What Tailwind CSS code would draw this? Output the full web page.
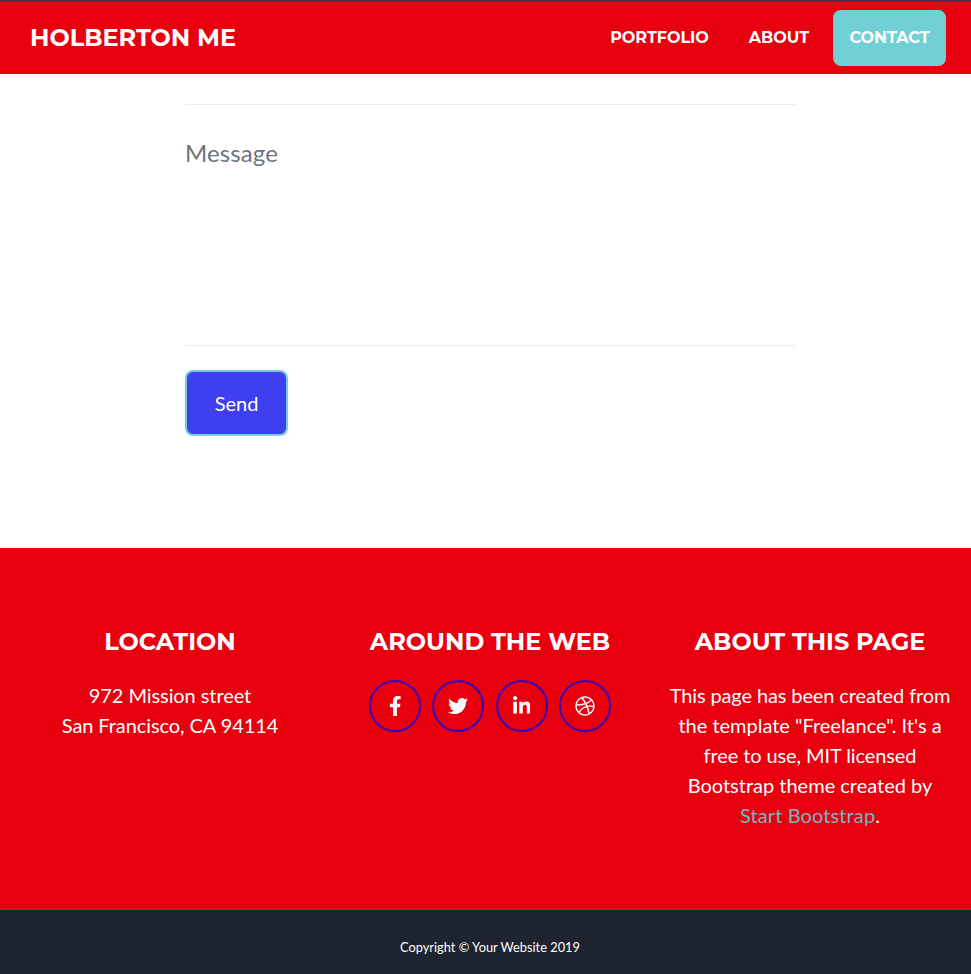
<!DOCTYPE html>
<html lang="en">
<head>
<meta charset="utf-8">
<title>Holberton Me</title>
<script src="https://cdn.jsdelivr.net/npm/@tailwindcss/browser@4"></script>
</head>
<body class="w-[971px] h-[974px] overflow-hidden bg-white font-[Lato,sans-serif] text-white">
<header class="flex h-[74px] items-start border-t-2 border-[#3b3b3b] bg-[#e8000f] pl-[30px] pr-[25px] font-['Montserrat','Inter',sans-serif] font-bold">
  <a class="mt-[18px] block whitespace-nowrap text-2xl leading-9">HOLBERTON ME</a>
  <nav class="ml-auto mt-2 flex gap-2 text-base leading-6">
    <a class="flex h-14 w-[131px] items-center justify-center whitespace-nowrap">PORTFOLIO</a>
    <a class="flex h-14 w-[92px] items-center justify-center whitespace-nowrap">ABOUT</a>
    <a class="flex h-14 w-[113px] items-center justify-center whitespace-nowrap rounded-lg bg-[#71d0d6]">CONTACT</a>
  </nav>
</header>
<main class="h-[474px] pl-[185px] pt-[30px]">
  <div class="h-[242px] w-[610px] border-y border-[#e9ecef] pt-[30px] text-2xl leading-9 tracking-[0.1px] text-[#6c757d]">Message</div>
  <button class="mt-6 block h-[66px] w-[103px] rounded-lg border-2 border-[#71d0d6] bg-[#3f3ff2] text-xl">Send</button>
</main>
<footer>
  <div class="grid h-[362px] w-[980px] grid-cols-3 bg-[#e8000f] px-[10px] pt-[79px] text-center">
    <section>
      <h4 class="h-[53px] whitespace-nowrap font-['Montserrat','Inter',sans-serif] text-2xl leading-[29px] font-bold">LOCATION</h4>
      <p class="text-xl leading-[30px] tracking-[-0.08px]">972 Mission street<br>San Francisco, CA 94114</p>
    </section>
    <section>
      <h4 class="h-[53px] whitespace-nowrap font-['Montserrat','Inter',sans-serif] text-2xl leading-[29px] font-bold">AROUND THE WEB</h4>
      <div class="flex justify-center gap-[11.4px] text-[#f8f9fa]">
        <a class="flex size-[52px] items-center justify-center rounded-full border-2 border-[#3a00b5]"><svg class="h-5" viewBox="0 0 320 512" fill="currentColor"><path d="M279.14 288l14.22-92.66h-88.91v-60.13c0-25.35 12.42-50.06 52.24-50.06h40.42V6.26S260.43 0 225.36 0c-73.22 0-121.08 44.38-121.08 124.72v70.62H22.89V288h81.39v224h100.17V288z"/></svg></a>
        <a class="flex size-[52px] items-center justify-center rounded-full border-2 border-[#3a00b5]"><svg class="h-5" viewBox="0 0 512 512" fill="currentColor"><path d="M459.37 151.716c.325 4.548.325 9.097.325 13.645 0 138.72-105.583 298.558-298.558 298.558-59.452 0-114.68-17.219-161.137-47.106 8.447.974 16.568 1.299 25.34 1.299 49.055 0 94.213-16.568 130.274-44.832-46.132-.975-84.792-31.188-98.112-72.772 6.498.974 12.995 1.624 19.818 1.624 9.421 0 18.843-1.3 27.614-3.573-48.081-9.747-84.143-51.98-84.143-102.985v-1.299c13.969 7.797 30.214 12.67 47.431 13.319-28.264-18.843-46.781-51.005-46.781-87.391 0-19.492 5.197-37.36 14.294-52.954 51.655 63.675 129.3 105.258 216.365 109.807-1.624-7.797-2.599-15.918-2.599-24.04 0-57.828 46.782-104.934 104.934-104.934 30.213 0 57.502 12.67 76.67 33.137 23.715-4.548 46.456-13.32 66.599-25.34-7.798 24.366-24.366 44.833-46.132 57.827 21.117-2.273 41.584-8.122 60.426-16.243-14.292 20.791-32.161 39.308-52.628 54.253z"/></svg></a>
        <a class="flex size-[52px] items-center justify-center rounded-full border-2 border-[#3a00b5]"><svg class="h-5" viewBox="0 0 448 512" fill="currentColor"><path d="M100.28 448H7.4V148.9h92.88zM53.79 108.1C24.09 108.1 0 83.5 0 53.8a53.79 53.79 0 0 1 107.58 0c0 29.7-24.1 54.3-53.79 54.3zM447.9 448h-92.68V302.4c0-34.7-.7-79.2-48.29-79.2-48.29 0-55.69 37.7-55.69 76.7V448h-92.78V148.9h89.08v40.8h1.3c12.4-23.5 42.69-48.3 87.88-48.3 94 0 111.28 61.9 111.28 142.3V448z"/></svg></a>
        <a class="flex size-[52px] items-center justify-center rounded-full border-2 border-[#3a00b5]"><svg class="h-5" viewBox="0 0 512 512" fill="currentColor"><path d="M256 8C119.252 8 8 119.252 8 256s111.252 248 248 248 248-111.252 248-248S392.748 8 256 8zm163.97 114.366c29.503 36.046 47.369 81.957 47.835 131.955-6.984-1.477-77.018-15.682-147.502-6.818-5.752-14.041-11.181-26.393-18.617-41.614 78.321-31.977 113.818-77.482 118.284-83.523zM396.421 97.87c-3.81 5.427-35.697 48.286-111.021 76.519-34.712-63.776-73.185-116.168-79.04-124.008 67.176-16.193 137.966 1.27 190.061 47.489zm-230.48-33.25c5.585 7.659 43.438 60.116 78.537 122.509-99.087 26.313-186.36 25.934-195.834 25.809C62.38 147.205 106.678 92.573 165.941 64.62zM44.17 256.323c0-2.166.043-4.322.108-6.473 9.268.19 111.92 1.513 217.706-30.146 6.064 11.868 11.857 23.915 17.174 35.949-76.599 21.575-146.194 83.527-180.531 142.306C64.794 360.405 44.17 310.73 44.17 256.323zm81.807 167.113c22.127-45.233 82.178-103.622 167.579-132.756 29.74 77.283 42.039 142.053 45.189 160.638-68.112 29.013-150.015 21.053-212.768-27.882zm248.38 8.489c-2.171-12.886-13.446-74.897-41.152-151.033 66.38-10.626 124.7 6.768 131.947 9.055-9.442 58.941-43.273 109.844-90.795 141.978z"/></svg></a>
      </div>
    </section>
    <section>
      <h4 class="h-[53px] whitespace-nowrap font-['Montserrat','Inter',sans-serif] text-2xl leading-[29px] font-bold">ABOUT THIS PAGE</h4>
      <p class="text-xl leading-[30px]"><span class="tracking-[-0.12px]">This page has been created from</span><br>the template "Freelance". It's a<br><span class="tracking-[-0.1px]">free to use, MIT licensed</span><br>Bootstrap theme created by<br><a class="tracking-[0.1px] text-[#7bb5c4]">Start Bootstrap</a>.</p>
    </section>
  </div>
  <div class="h-16 w-[980px] bg-[#1d2430] pt-[27px] text-center text-[12.8px] leading-5">Copyright © Your Website 2019</div>
</footer>
</body>
</html>
